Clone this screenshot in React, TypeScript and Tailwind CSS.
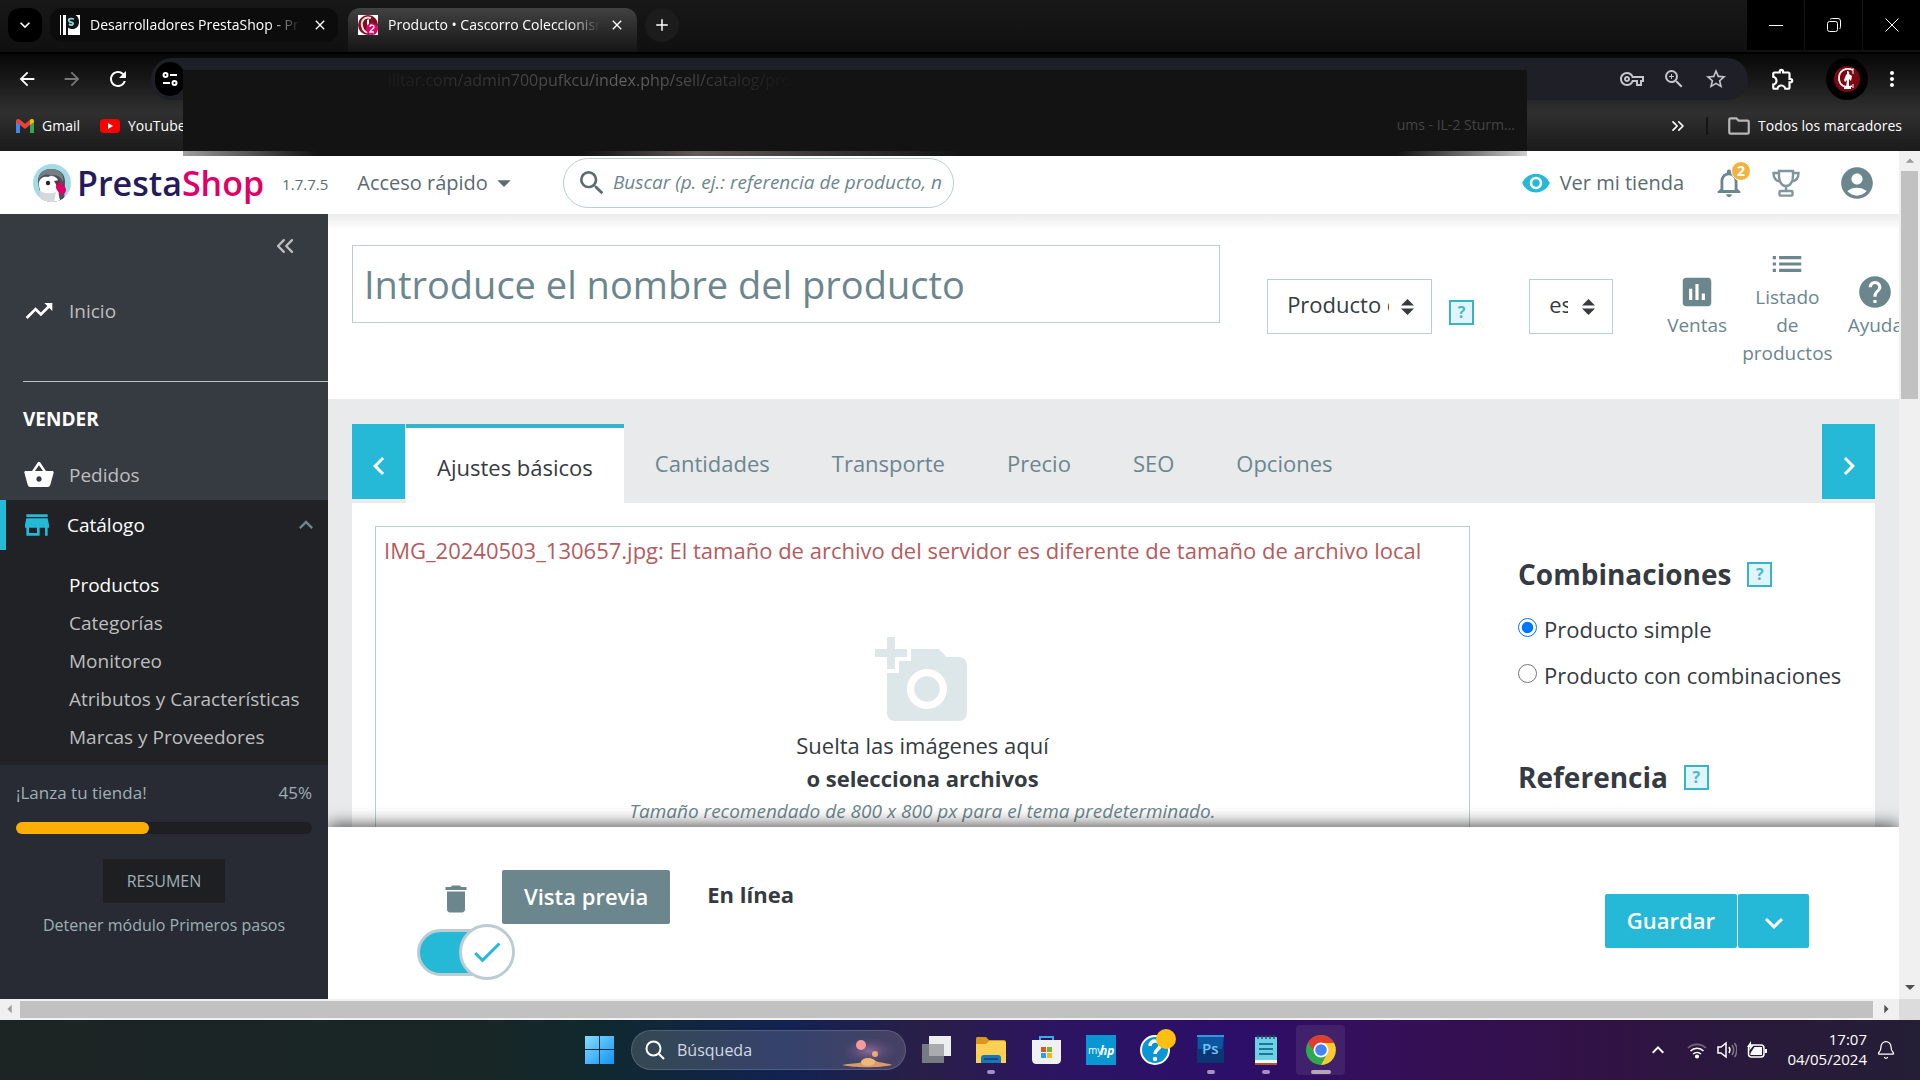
import type { ReactNode } from "react";
import {
  MdAccountCircle,
  MdAddAPhoto,
  MdArrowBack,
  MdArrowDropDown,
  MdArrowDropUp,
  MdArrowForward,
  MdArrowLeft,
  MdArrowRight,
  MdCheck,
  MdChevronLeft,
  MdChevronRight,
  MdClose,
  MdDelete,
  MdExpandLess,
  MdExpandMore,
  MdHelp,
  MdInsertChart,
  MdList,
  MdMoreVert,
  MdNotificationsNone,
  MdOutlineExtension,
  MdOutlineFolder,
  MdOutlineVpnKey,
  MdRefresh,
  MdSearch,
  MdShoppingBasket,
  MdStarBorder,
  MdStore,
  MdTrendingUp,
  MdVisibility,
  MdZoomIn,
} from "react-icons/md";
import { Bell, ChevronsLeft, ChevronsRight, Plus } from "lucide-react";

const subItems = [
  "Productos",
  "Categorías",
  "Monitoreo",
  "Atributos y Características",
  "Marcas y Proveedores",
];

const tabs = ["Cantidades", "Transporte", "Precio", "SEO", "Opciones"];

function PrestaFavicon() {
  return (
    <svg viewBox="0 0 20 20" className="h-5 w-5 shrink-0" aria-hidden="true">
      <path d="M0 0h20v20H0z" fill="#111" />
      <path d="M0 0h1v20H0zM3 0h3v20H3zM6 0h2v8c0 4 3 5 5 5 4 0 5-3 5-6 0-4-1-6-3-7h5v20H8V0z" fill="#fff" />
      <path d="M6 0h9c3 1 4 4 4 7s-2 7-6 7-7-2-7-6z" fill="#111" />
      <path d="M14 4c-4-1-6 0-5 2s5 1 4 3-3 1-4 0" stroke="#8fd3df" strokeWidth="1.8" fill="none" />
    </svg>
  );
}

function ShopFavicon() {
  return (
    <svg viewBox="0 0 20 20" className="h-5 w-5 shrink-0" aria-hidden="true">
      <path d="M0 0h20v20H0z" fill="#fff" />
      <circle cx="10" cy="10" r="10" fill="#7c1020" />
      <path d="M13 3C6 1 3 6 4 11s4 7 7 6" stroke="#f3dcdc" strokeWidth="2" fill="none" />
      <path d="M9 5l2-1v9H9z" fill="#fff" />
      <circle cx="14" cy="14" r="6" fill="#df0067" />
      <path d="M12 12c0-3 4-2 4 0s-4 3-4 5h4" stroke="#fff" strokeWidth="1.5" fill="none" />
    </svg>
  );
}

function TuneIcon() {
  return (
    <svg viewBox="0 0 16 16" className="h-4 w-4" fill="none" stroke="#fff" strokeWidth="2" aria-hidden="true">
      <circle cx="3.5" cy="4" r="2" />
      <path d="M8 4h7M1 12h7" />
      <circle cx="12.5" cy="12" r="2" />
    </svg>
  );
}

function ProfileAvatar() {
  return (
    <svg viewBox="0 0 42 42" className="h-[42px] w-[42px]" aria-hidden="true">
      <circle cx="21" cy="21" r="21" fill="#000" />
      <circle cx="21" cy="21" r="13" fill="#7d0812" />
      <path d="M27 12c-8-3-14 1-14 8s6 11 13 8" stroke="#fff" strokeWidth="1.8" fill="none" />
      <path d="M27 10v6M27 26v4" stroke="#fff" strokeWidth="1" />
      <path d="M21 13a2 2 0 0 1 2 3l3 2-1 5-2-2v8h2v2h-7v-2h2l1-7-2 2-1-2 2-5 1-1z" fill="#fff" />
    </svg>
  );
}

function TrophyIcon() {
  return (
    <svg viewBox="0 0 28 28" className="h-7 w-7" fill="none" stroke="#7f969d" strokeWidth="2.400" aria-hidden="true">
      <path d="M7 2h14v5c0 6-3 10-7 10S7 13 7 7z" />
      <path d="M7 4H1.500c0 5 2.500 8 7 8.500M21 4h5.500c0 5-2.500 8-7 8.500M14 17v5" />
      <rect x="7.500" y="22" width="13" height="4.600" rx="1" />
    </svg>
  );
}

function Puffin() {
  return (
    <svg viewBox="0 0 38 38" className="h-[38px] w-[38px] shrink-0" aria-hidden="true">
      <defs>
        <clipPath id="puffin">
          <circle cx="19" cy="19" r="19" />
        </clipPath>
      </defs>
      <g clipPath="url(#puffin)">
        <path d="M0 0h38v38H0z" fill="#a3dbe6" />
        <path d="M5 17C5 9 11 5 18 5c9 0 14 5 14 13l-1 20H8z" fill="#4b5157" />
        <path d="M6 18c1-4 5-6 9-5 3-2 8-1 10 3 3 7-2 12 3 22H8c3-7-3-12-2-20z" fill="#fff" />
        <path d="M5 17C8 11 14 9 18 12c5-2 10 1 12 6 2-8-4-13-12-13C10 5 6 10 5 17z" fill="#777d82" />
        <path d="M6 26c5 4 11 4 17 2l-2 10H7z" fill="#d6d9db" />
        <circle cx="15" cy="19" r="2.200" fill="#24252c" />
        <path d="M26 17c-3 3-4 6-2 9l4 5c5-1 6-5 4-8z" fill="#df0067" />
        <path d="M21 17l6-1-3 6z" fill="#5a3442" />
      </g>
    </svg>
  );
}

function Caret({ className }: { className?: string }) {
  return (
    <svg viewBox="0 0 13 16" className={className} fill="#363a41" aria-hidden="true">
      <path d="M6.500 0L13 6.500H0zM6.500 16L0 9.500h13z" />
    </svg>
  );
}

function HelpBox() {
  return (
    <button
      aria-label="Ayuda contextual"
      className="flex h-[25px] w-[25px] shrink-0 items-center justify-center border-2 border-[#38b4c9] bg-[#dff5fa] text-base font-bold leading-none text-[#4fb5cc]"
    >
      ?
    </button>
  );
}

function BrowserTabs() {
  return (
    <div className="flex h-[54px] items-start border-b-2 border-black bg-linear-to-b from-[#181818] to-[#101010] pl-2 text-sm text-white">
      <button aria-label="Buscar pestañas" className="mt-2 flex h-[34px] w-[34px] items-center justify-center rounded-xl bg-black">
        <MdExpandMore className="h-5 w-5" />
      </button>
      <div className="ml-2 mt-2 flex h-[34px] w-[288px] items-center rounded-xl bg-[#0c0c0c] pl-[10px] pr-[10px]">
        <PrestaFavicon />
        <span className="ml-[10px] w-[210px] overflow-hidden whitespace-nowrap mask-r-from-85%">
          Desarrolladores PrestaShop - PrestaShop
        </span>
        <button aria-label="Cerrar pestaña" className="ml-auto">
          <MdClose className="h-4 w-4" />
        </button>
      </div>
      <div className="ml-[10px] mt-2 flex h-11 w-[289px] items-start rounded-t-xl bg-linear-to-b from-[#424242] to-[#151515] pl-[10px] pr-3">
        <span className="mt-[7px]">
          <ShopFavicon />
        </span>
        <span className="ml-[10px] mt-[7px] w-[212px] overflow-hidden whitespace-nowrap mask-r-from-85%">
          Producto • Cascorro Coleccionismo
        </span>
        <button aria-label="Cerrar pestaña" className="ml-auto mt-[9px]">
          <MdClose className="h-4 w-4" />
        </button>
      </div>
      <button aria-label="Nueva pestaña" className="ml-2 mt-2 flex h-[34px] w-[34px] items-center justify-center rounded-full bg-[#1c1c1c]">
        <Plus className="h-[18px] w-[18px]" />
      </button>
      <div className="ml-auto grid h-[50px] grid-cols-3 gap-px">
        <button aria-label="Minimizar" className="flex w-[57px] items-center justify-center bg-black">
          <svg viewBox="0 0 14 14" className="h-[14px] w-[14px]" stroke="#fff" fill="none">
            <path d="M0 7.500h14" />
          </svg>
        </button>
        <button aria-label="Restaurar" className="flex w-[57px] items-center justify-center bg-black">
          <svg viewBox="0 0 14 14" className="h-[14px] w-[14px]" stroke="#fff" fill="none">
            <rect x=".5" y="3.500" width="10" height="10" rx="2" />
            <path d="M3 1.500C4 .5 5 .5 6 .5h5a2.500 2.500 0 0 1 2.500 2.500v5c0 1 0 2-1 3" />
          </svg>
        </button>
        <button aria-label="Cerrar" className="flex w-[57px] items-center justify-center bg-black">
          <svg viewBox="0 0 14 14" className="h-[14px] w-[14px]" stroke="#fff" fill="none">
            <path d="M.5.5l13 13M13.500.5l-13 13" />
          </svg>
        </button>
      </div>
    </div>
  );
}

function BrowserToolbar() {
  return (
    <div className="relative z-10 h-[97px] bg-linear-to-b from-[#080808] via-[#303030] via-60% to-[#1b1b1b] pt-1 text-sm text-white">
      <div className="flex h-[42px] items-center pl-4 pr-4">
        <button aria-label="Atrás">
          <MdArrowBack className="h-[22px] w-[22px]" />
        </button>
        <button aria-label="Adelante" className="ml-[23px] text-[#777]">
          <MdArrowForward className="h-[22px] w-[22px]" />
        </button>
        <button aria-label="Recargar" className="ml-[23px]">
          <MdRefresh className="h-6 w-6" />
        </button>
        <div className="ml-[21px] flex h-[42px] flex-1 items-center gap-[18px] rounded-full bg-[#1f2027] pr-5 text-[#c4c6cb]">
          <span className="ml-1 mr-auto flex h-[34px] w-[30px] items-center justify-center rounded-full bg-black">
            <TuneIcon />
          </span>
          <MdOutlineVpnKey className="h-6 w-6" />
          <MdZoomIn className="h-6 w-6" />
          <MdStarBorder className="h-6 w-6" />
        </div>
        <button aria-label="Extensiones" className="ml-[22px]">
          <MdOutlineExtension className="h-[26px] w-[26px]" />
        </button>
        <button aria-label="Perfil" className="ml-[30px]">
          <ProfileAvatar />
        </button>
        <button aria-label="Menú" className="ml-3">
          <MdMoreVert className="h-6 w-6" />
        </button>
      </div>
      <div className="flex h-[51px] items-center pl-4 pr-[18px]">
        <svg viewBox="0 0 18 14" className="h-[14px] w-[18px]" aria-hidden="true">
          <path d="M0 2v12h4V5z" fill="#4285f4" />
          <path d="M14 5v9h4V2z" fill="#34a853" />
          <path d="M0 1.500C1-.3 3-.3 4 .8l5 4 5-4V6l-5 4-5-4-4-3z" fill="#ea4335" />
          <path d="M14 .8c1-1.300 4-1 4 1.200v1l-4 3z" fill="#fbbc04" />
        </svg>
        <a href="#" className="ml-2">Gmail</a>
        <svg viewBox="0 0 20 14" className="ml-5 h-[14px] w-5" aria-hidden="true">
          <rect width="20" height="14" rx="4" fill="#f00" />
          <path d="M8 4l5 3-5 3z" fill="#fff" />
        </svg>
        <a href="#" className="ml-2">YouTube</a>
        <ChevronsRight className="ml-auto h-5 w-5" />
        <span className="ml-[18px] h-[18px] w-[2px] bg-[#151515]" />
        <MdOutlineFolder className="ml-[18px] h-[26px] w-[26px] text-[#b8b8b8]" />
        <a href="#" className="ml-[6px]">Todos los marcadores</a>
      </div>
      {/* smudged band over the address and the bookmarks */}
      <div className="absolute -bottom-[5px] left-[183px] right-[393px] top-4 flex flex-col bg-[#131313]">
        <div className="flex-1">
          <span className="ml-[205px] inline-block bg-linear-to-r from-[#1a1a1a] via-[#666] via-60% to-[#151515] bg-clip-text text-base leading-5 text-transparent">
            ilitar.com/admin700pufkcu/index.php/sell/catalog/pro
          </span>
        </div>
        <p className="pb-4 pr-3 text-right text-[#444]">ums - IL-2 Sturm...</p>
        <div className="h-[5px] bg-linear-to-r from-[#a0a0a0] via-[#131313] via-10% to-[#131313]" />
        <div className="absolute bottom-0 right-0 h-[5px] w-[130px] bg-linear-to-r from-[#131313] to-[#cfcfcf]" />
        <div className="absolute bottom-0 left-[400px] h-[5px] w-[380px] bg-linear-to-r from-[#131313] via-[#625a5b] via-30% to-[#131313]" />
      </div>
    </div>
  );
}

function AdminHeader() {
  return (
    <header className="flex h-[63px] shrink-0 items-center bg-white pl-[33px] pr-[23px] text-xl text-[#5b6b70]">
      <Puffin />
      <a href="#" className="ml-[6px] text-[34px] font-semibold leading-none text-[#251b5b]">
        Presta<span className="text-[#df0067]">Shop</span>
      </a>
      <span className="ml-[18px] pt-1 text-[15px]">1.7.7.5</span>
      <button className="ml-[29px] flex items-center">
        Acceso rápido
        <MdArrowDropDown className="h-8 w-8" />
      </button>
      <label className="ml-[43px] flex h-[50px] w-[391px] items-center rounded-full border border-[#bbcdd2] pl-3 pr-[10px]">
        <MdSearch className="h-8 w-8 shrink-0" />
        <input
          type="text"
          aria-label="Buscar"
          placeholder="Buscar (p. ej.: referencia de producto, nombre del cliente...)"
          className="ml-[5px] min-w-0 flex-1 text-[19px] italic outline-none placeholder:text-[#6c868e]"
        />
      </label>
      <a href="#" className="ml-auto flex items-center gap-[9px]">
        <MdVisibility className="h-[30px] w-[30px] text-[#25b9d7]" />
        Ver mi tienda
      </a>
      <button aria-label="Notificaciones" className="relative ml-7 text-[#6c868e]">
        <MdNotificationsNone className="h-[34px] w-[34px]" />
        <span className="absolute -top-[5px] right-[-5px] flex h-5 w-5 items-center justify-center rounded-full border border-white bg-[#f1b340] text-sm font-bold leading-none text-white">
          2
        </span>
      </button>
      <button aria-label="Logros" className="ml-[26px]">
        <TrophyIcon />
      </button>
      <button aria-label="Cuenta" className="ml-[38px] text-[#6c868e]">
        <MdAccountCircle className="h-[38px] w-[38px]" />
      </button>
    </header>
  );
}

function Sidebar() {
  return (
    <nav className="flex w-[328px] shrink-0 flex-col bg-[#363a41] text-[19px] text-[#bebebe]">
      <button aria-label="Contraer menú" className="mr-[29px] mt-[18px] self-end">
        <ChevronsLeft className="h-7 w-7" strokeWidth={2} />
      </button>
      <a href="#" className="mt-[31px] flex h-10 items-center pl-[23px]">
        <MdTrendingUp className="mr-[14px] h-8 w-8 text-white" />
        Inicio
      </a>
      <div className="ml-[23px] mt-[50px] h-px bg-[#bebebe]" />
      <h2 className="mt-[21px] pl-[23px] font-bold leading-8 text-white">VENDER</h2>
      <a href="#" className="mt-[15px] flex h-[50px] items-center pl-[23px]">
        <MdShoppingBasket className="mr-[14px] h-8 w-8 text-white" />
        Pedidos
      </a>
      <div className="bg-[#202226] pb-[9px]">
        <a href="#" className="flex h-[50px] items-center border-l-[6px] border-[#25b9d7] pl-[15px] text-white">
          <MdStore className="mr-[14px] h-8 w-8 text-[#25b9d7]" />
          Catálogo
          <MdExpandLess className="ml-auto mr-2 h-7 w-7 text-[#6c868e]" />
        </a>
        <ul className="pl-[69px] pt-4">
          {subItems.map((item, i) => (
            <li key={item} className="leading-[38px]">
              <a href="#" className={i === 0 ? "font-medium text-white" : ""}>
                {item}
              </a>
            </li>
          ))}
        </ul>
      </div>
      <div className="flex flex-1 flex-col items-center bg-[#282b33] px-4 pt-4 text-base text-[#9fb0b5]">
        <div className="flex w-full justify-between text-[17px] leading-6">
          <span>¡Lanza tu tienda!</span>
          <span>45%</span>
        </div>
        <div className="mt-[17px] h-3 w-full rounded-full bg-[#1d1f22]">
          <div className="h-3 rounded-full bg-[#fbae03]" style={{ width: "45%" }} />
        </div>
        <button className="mt-[25px] h-11 bg-[#1d1f22] px-6 font-medium">RESUMEN</button>
        <a href="#" className="mt-[10px] font-medium">
          Detener módulo Primeros pasos
        </a>
      </div>
    </nav>
  );
}

function Tool({ icon, label }: { icon: ReactNode; label: string }) {
  return (
    <button className="flex w-min flex-col items-center text-center text-[19px] leading-7 text-[#6c868e]">
      {icon}
      {label}
    </button>
  );
}

function ProductHeader() {
  return (
    <div className="flex shrink-0 items-center bg-[linear-gradient(#ececec,#fff_16px)] pb-8 pl-6 pt-[31px]">
      <input
        type="text"
        aria-label="Nombre del producto"
        placeholder="Introduce el nombre del producto"
        className="h-[78px] min-w-0 flex-1 self-start border border-[#bbcdd2] bg-white px-[11px] text-[38px] outline-none placeholder:text-[#6c868e]"
      />
      <div className="relative ml-[47px] shrink-0">
        <select
          aria-label="Tipo de producto"
          className="h-[55px] w-[165px] appearance-none border border-[#bbcdd2] bg-white pb-[3px] pl-[19px] pr-[42px] text-[22px] text-[#363a41]"
        >
          <option>Producto estándar</option>
          <option>Pack de productos</option>
          <option>Producto virtual</option>
        </select>
        <Caret className="pointer-events-none absolute right-[18px] top-5 h-4 w-[13px]" />
      </div>
      <div className="ml-[17px] pt-3">
        <HelpBox />
      </div>
      <div className="relative ml-[55px] shrink-0">
        <select
          aria-label="Idioma"
          className="h-[55px] w-[84px] appearance-none border border-[#bbcdd2] bg-white pb-[3px] pl-[19px] pr-[44px] text-[22px] text-[#363a41]"
        >
          <option>es</option>
          <option>en</option>
        </select>
        <Caret className="pointer-events-none absolute right-[18px] top-5 h-4 w-[13px]" />
      </div>
      <div className="-mr-1 ml-[54px] flex shrink-0 items-center gap-[15px]">
        <Tool icon={<MdInsertChart className="h-[38px] w-[38px]" />} label="Ventas" />
        <Tool icon={<MdList className="h-[38px] w-[38px]" />} label="Listado de productos" />
        <Tool icon={<MdHelp className="h-[38px] w-[38px]" />} label="Ayuda" />
      </div>
    </div>
  );
}

function ProductTabs() {
  return (
    <div className="flex h-[79px] items-start text-[22px] text-[#6c868e]">
      <button aria-label="Pestaña anterior" className="mr-px flex h-[75px] w-[53px] items-center justify-center bg-[#25b9d7] pt-2 text-white">
        <MdChevronLeft className="h-9 w-9" stroke="currentColor" />
      </button>
      <button className="h-[79px] border-t-4 border-[#38b4c9] bg-white px-[31px] pt-1 text-[#363a41]">Ajustes básicos</button>
      {tabs.map((tab) => (
        <button key={tab} className="h-[75px] px-[31px] pt-[3px]">
          {tab}
        </button>
      ))}
      <button aria-label="Pestaña siguiente" className="ml-auto flex h-[75px] w-[53px] items-center justify-center bg-[#25b9d7] pt-2 text-white">
        <MdChevronRight className="h-9 w-9" stroke="currentColor" />
      </button>
    </div>
  );
}

function ProductForm() {
  return (
    <div className="flex flex-1 bg-white pl-[23px] pt-[23px] text-[22px] leading-[33px] text-[#363a41]">
      <div className="flex h-[420px] min-w-0 flex-1 flex-col border border-[#bbcdd2] bg-white px-2 pt-[7px]">
        <p className="text-[#b55b60]">
          IMG_20240503_130657.jpg: El tamaño de archivo del servidor es diferente de tamaño de archivo local
        </p>
        <div className="mt-[66px] flex flex-col items-center">
          <MdAddAPhoto className="h-24 w-24 text-[#dde6e9]" />
          <p>Suelta las imágenes aquí</p>
          <button className="font-bold">o selecciona archivos</button>
          <p className="text-[19px] leading-[33px] italic text-[#6c868e]">
            Tamaño recomendado de 800 x 800 px para el tema predeterminado.
          </p>
        </div>
      </div>
      <aside className="ml-12 w-[357px] shrink-0 pt-[30px]">
        <div className="flex items-center gap-4">
          <h2 className="text-[28px] font-bold leading-9">Combinaciones</h2>
          <HelpBox />
        </div>
        <div className="mt-[21px] flex flex-col gap-[13px]">
          <label className="flex items-start gap-[7px]">
            <input type="radio" name="combinations" defaultChecked className="mt-[5px] h-[19px] w-[19px]" />
            Producto simple
          </label>
          <label className="flex items-start gap-[7px]">
            <input type="radio" name="combinations" className="mt-[5px] h-[19px] w-[19px]" />
            Producto con combinaciones
          </label>
        </div>
        <div className="mt-[67px] flex items-center gap-4">
          <h2 className="text-[28px] font-bold leading-9">Referencia</h2>
          <HelpBox />
        </div>
      </aside>
    </div>
  );
}

function ActionBar() {
  return (
    <div className="relative flex h-[172px] shrink-0 items-start justify-between bg-white pl-[89px] pr-[90px] pt-[43px] text-[22px] font-semibold text-[#363a41] shadow-[0_-2px_16px_rgba(0,0,0,0.7)]">
      <div>
        <div className="flex h-[54px] items-center">
          <button aria-label="Eliminar" className="ml-[21px] pt-[3px] text-[#6c868e]">
            <MdDelete className="h-9 w-9" />
          </button>
          <button className="ml-7 h-[54px] rounded-xs bg-[#6c868e] px-[22px] pb-[2px] text-white">Vista previa</button>
          <span className="ml-[37px] pb-[6px] font-bold">En línea</span>
        </div>
        <label className="relative flex h-14 w-[98px] cursor-pointer items-center">
          <input type="checkbox" defaultChecked aria-label="En línea" className="peer sr-only" />
          <span className="h-[47px] w-[90px] rounded-full border-[3px] border-[#bbcdd2] bg-[#25b9d7]" />
          <span className="absolute right-0 flex h-14 w-14 items-center justify-center rounded-full border-[3px] border-[#bbcdd2] bg-white text-[#25b9d7]">
            <MdCheck className="h-9 w-9" />
          </span>
        </label>
      </div>
      <div className="mt-6 flex gap-px">
        <button className="h-[54px] rounded-xs bg-[#25b9d7] px-[22px] pb-[2px] text-white">Guardar</button>
        <button aria-label="Más opciones" className="flex h-[54px] w-[71px] items-center justify-center rounded-xs bg-[#25b9d7] pt-1 text-white">
          <MdExpandMore className="h-9 w-9" stroke="currentColor" />
        </button>
      </div>
    </div>
  );
}

function VerticalScrollbar() {
  return (
    <div className="flex w-[21px] shrink-0 flex-col items-center justify-between bg-[#f0f0f0]">
      <div className="flex w-full flex-col items-center">
        <MdArrowDropUp className="h-5 w-5 text-[#9a9a9a]" />
        <div className="h-[228px] w-[17px] bg-[#c1c1c1]" />
      </div>
      <MdArrowDropDown className="h-6 w-6 text-[#505050]" />
    </div>
  );
}

function TaskCell({ children, running, active }: { children: ReactNode; running?: boolean; active?: boolean }) {
  return (
    <button className="relative flex h-[60px] w-[55px] items-center justify-center">
      {active && <span className="absolute inset-x-[3px] inset-y-[5px] rounded bg-white/8" />}
      <svg viewBox="0 0 32 32" className="relative h-8 w-8 overflow-visible" aria-hidden="true">
        {children}
      </svg>
      {running && !active && <span className="absolute bottom-[6px] h-1 w-2 rounded-full bg-[#a58fc4]" />}
      {active && <span className="absolute bottom-[6px] h-1 w-5 rounded-full bg-[#b3a8b5]" />}
    </button>
  );
}

function Taskbar() {
  return (
    <footer className="grid h-[60px] shrink-0 grid-cols-[1fr_auto_1fr] bg-[linear-gradient(90deg,#1d2424_0%,#192626_25%,#10292e_31%,#122253_41%,#291f48_48%,#2c1462_55%,#2c0f69_64%,#350f59_72%,#321147_82%,#281a3a_92%,#241e36_100%)] text-white">
      <div />
      <div className="flex items-center">
        <TaskCell>
          <defs>
            <linearGradient id="win" x1="0" y1="0" x2="1" y2="1">
              <stop offset="0" stopColor="#86dcff" />
              <stop offset="1" stopColor="#1193f5" />
            </linearGradient>
          </defs>
          <path d="M1 2h14v13H1zM16 2h14v13H16zM1 16h14v14H1zM16 16h14v14H16z" fill="url(#win)" />
        </TaskCell>
        <label className="ml-1 mr-[2px] flex h-10 w-[275px] items-center rounded-full border border-white/15 bg-white/15 pl-[13px]">
          <svg viewBox="0 0 20 20" className="h-5 w-5" fill="none" stroke="#fff" strokeWidth="2" aria-hidden="true">
            <circle cx="8.500" cy="8.500" r="7" />
            <path d="M13.500 13.500L19 19" />
          </svg>
          <input
            type="text"
            aria-label="Búsqueda"
            placeholder="Búsqueda"
            className="ml-3 w-[160px] text-base outline-none placeholder:text-[#d5d8e2]"
          />
          <svg viewBox="0 0 60 38" className="h-[38px] w-[60px]" aria-hidden="true">
            <defs>
              <radialGradient id="dusk">
                <stop offset="0" stopColor="#b98ab0" stopOpacity=".6" />
                <stop offset="1" stopColor="#6a4a80" stopOpacity="0" />
              </radialGradient>
            </defs>
            <ellipse cx="32" cy="20" rx="28" ry="14" fill="url(#dusk)" />
            <circle cx="24" cy="14" r="5" fill="#f39a9c" />
            <circle cx="38" cy="23" r="3" fill="#f0a77a" />
            <path d="M5 34c8-2 16-1 20-3 2-4 10-5 14-1 4 2 12 2 16 4-12 3-38 3-50 0z" fill="#dd9a67" />
            <ellipse cx="31" cy="31" rx="7" ry="4" fill="#edb878" />
          </svg>
        </label>
        <TaskCell>
          <path d="M9 2h22v20H9z" fill="#eee" />
          <path d="M2 10h22v19H2z" fill="#777a80" />
          <path d="M9 10h15v12H9z" fill="#a9abad" />
        </TaskCell>
        <TaskCell running>
          <path d="M1 5c0-2 1-2 2-2h8l3 3h15c1 0 2 1 2 2v6H1z" fill="#d8981d" />
          <path d="M1 10h10l3-3h15c1 0 2 1 2 2v20H1z" fill="#fccf55" />
          <path d="M6 29v-5c0-2 1-3 3-3h14c2 0 3 1 3 3v5z" fill="#1976b8" />
          <path d="M9 25h14" stroke="#0e4f87" strokeWidth="2" />
        </TaskCell>
        <TaskCell>
          <path d="M10 8V3h13v5" stroke="#35aee2" strokeWidth="2" fill="none" />
          <path d="M2 6h29v19c0 4-2 5-5 5H7c-3 0-5-1-5-5z" fill="#f0f0f2" />
          <path d="M11 13h5v5h-5z" fill="#e74f2b" />
          <path d="M17 13h5v5h-5z" fill="#7fb22c" />
          <path d="M11 19h5v5h-5z" fill="#22a3e6" />
          <path d="M17 19h5v5h-5z" fill="#f7b61b" />
        </TaskCell>
        <TaskCell>
          <path d="M1 1h30v30H1z" fill="#0a96d3" />
          <text x="3" y="20" fill="#fff" fontSize="10" fontFamily="Open Sans, sans-serif">
            my
          </text>
          <text x="15" y="21" fill="#fff" fontSize="12" fontStyle="italic" fontWeight="700" fontFamily="Open Sans, sans-serif">
            hp
          </text>
        </TaskCell>
        <TaskCell>
          <circle cx="15" cy="16" r="14" fill="#0a96d3" stroke="#fff" strokeWidth="2" />
          <path d="M10 12c0-7 11-6 10 0-1 4-5 4-5 8" stroke="#fff" strokeWidth="3.500" fill="none" />
          <circle cx="15" cy="25" r="2.200" fill="#fff" />
          <circle cx="26" cy="5" r="10" fill="#fdc010" />
        </TaskCell>
        <TaskCell running>
          <path d="M2 2h27v27H2z" fill="#0b3674" />
          <path d="M3 2h26l-2 13H3z" fill="#0c57a0" />
          <path d="M2 1h27v2H2z" fill="#3894dc" />
          <text x="7" y="20" fill="#71c5f5" fontSize="15" fontWeight="600" fontFamily="Open Sans, sans-serif">
            Ps
          </text>
        </TaskCell>
        <TaskCell running>
          <path d="M5 3h22v26H5z" fill="#6dd0e4" />
          <path d="M5 26h22v3H5z" fill="#f6f6f6" />
          <path d="M5 29h22v2H5z" fill="#a65a2c" />
          <path d="M9 10h14M9 15h14M9 20h14" stroke="#187b96" strokeWidth="2" />
          <path d="M8 1v4M12 1v4M16 1v4M20 1v4M24 1v4" stroke="#245569" strokeWidth="1.500" />
        </TaskCell>
        <TaskCell active>
          <circle cx="16" cy="16" r="15" fill="#2da94f" />
          <path d="M16 9h13a15 15 0 0 1-13 22l6-11z" fill="#fcc934" />
          <path d="M3 8.500A15 15 0 0 1 29 9H16l-6 10z" fill="#e33b2e" />
          <circle cx="16" cy="16" r="7.500" fill="#fff" />
          <circle cx="16" cy="16" r="5.800" fill="#4285f4" />
        </TaskCell>
      </div>
      <div className="flex items-center justify-end pr-6 text-[15px] leading-5">
        <MdExpandLess className="mr-[17px] h-6 w-6" />
        <svg viewBox="0 0 20 18" className="mr-[10px] h-[18px] w-5" fill="none" stroke="#fff" strokeWidth="1.600" aria-hidden="true">
          <path d="M1 7a13 13 0 0 1 18 0" opacity=".35" />
          <path d="M3.500 10a9 9 0 0 1 13 0M6 13a6 6 0 0 1 8 0" />
          <circle cx="10" cy="15.500" r="1.300" fill="#fff" />
        </svg>
        <svg viewBox="0 0 20 18" className="mr-[10px] h-[18px] w-5" fill="none" stroke="#fff" strokeWidth="1.500" aria-hidden="true">
          <path d="M1 6h3l5-4v14l-5-4H1z" />
          <path d="M12 6c1.300 2 1.300 4 0 6" />
          <path d="M15 4c2 3 2 7 0 10M17.500 2c3 4 3 10 0 14" opacity=".4" />
        </svg>
        <svg viewBox="0 0 20 18" className="mr-[20px] h-[18px] w-5" aria-hidden="true">
          <rect x="1.500" y="4" width="15.500" height="12" rx="3" stroke="#fff" strokeWidth="1.500" fill="none" />
          <path d="M3.500 12l4-6H15v8H3.500zM18 8h2v4h-2zM4 0L0 6h3l-1 4 5-6H4z" fill="#fff" />
        </svg>
        <div className="pb-[2px] text-right">
          <p>17:07</p>
          <p>04/05/2024</p>
        </div>
        <Bell className="ml-[9px] h-5 w-5" strokeWidth={1.5} />
      </div>
    </footer>
  );
}

export default function App() {
  return (
    <div className="flex h-screen flex-col overflow-hidden bg-white font-['Open_Sans',sans-serif]">
      <BrowserTabs />
      <BrowserToolbar />
      <div className="flex min-h-0 flex-1">
        <div className="flex min-w-0 flex-1 flex-col">
          <AdminHeader />
          <div className="flex min-h-0 flex-1">
            <Sidebar />
            <main className="flex min-w-0 flex-1 flex-col overflow-hidden">
              <div className="flex min-h-0 flex-1 flex-col overflow-hidden">
                <ProductHeader />
                <div className="flex flex-1 flex-col bg-[#e8eaec] px-6 pt-[25px]">
                  <ProductTabs />
                  <ProductForm />
                </div>
              </div>
              <ActionBar />
            </main>
          </div>
        </div>
        <VerticalScrollbar />
      </div>
      <div className="flex h-[21px] shrink-0 bg-[#f0f0f0]">
        <MdArrowLeft className="h-5 w-5 text-[#9a9a9a]" />
        <div className="my-[2px] flex-1 bg-[#c1c1c1]" />
        <MdArrowRight className="mx-[3px] h-5 w-5 text-[#505050]" />
        <div className="w-[21px] bg-[#dcdcdc]" />
      </div>
      <Taskbar />
    </div>
  );
}
